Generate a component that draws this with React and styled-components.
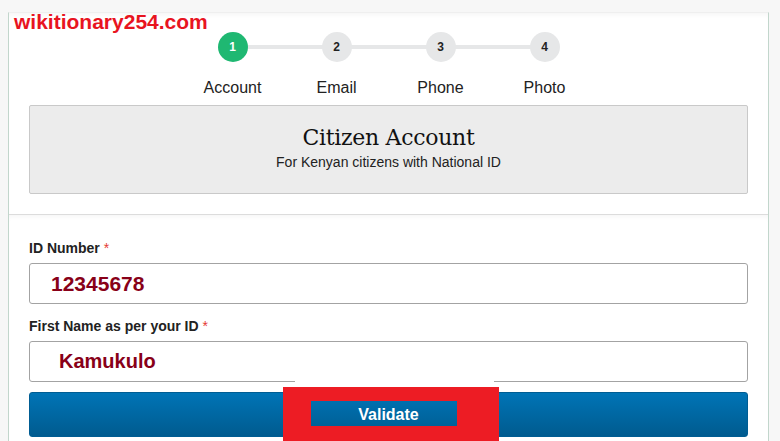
import React from 'react'
import styled, { createGlobalStyle } from 'styled-components'

const GlobalStyle = createGlobalStyle`
  html, body {
    margin: 0;
    padding: 0;
    background: #f7f7f7;
    font-family: 'Liberation Sans', Arial, sans-serif;
    color: #222;
  }
`

const steps = ['Account', 'Email', 'Phone', 'Photo']

export default function App () {
  return (
    <>
      <GlobalStyle />
      <Page>
        <Card>
          <Watermark>wikitionary254.com</Watermark>
          <Header>
            <Stepper>
              {steps.map((s, i) => (
                <Step key={s} $first={i === 0}>
                  <Dot $active={i === 0}>{i + 1}</Dot>
                  <StepLabel>{s}</StepLabel>
                </Step>
              ))}
            </Stepper>
            <TypeBox>
              <TypeTitle>Citizen Account</TypeTitle>
              <TypeSub>For Kenyan citizens with National ID</TypeSub>
            </TypeBox>
          </Header>
          <Form>
            <Label>ID Number <Req>*</Req></Label>
            <Input $indent={22} defaultValue='12345678' $size={21} readOnly />
            <Label>First Name as per your ID <Req>*</Req></Label>
            <Input $indent={30} defaultValue='Kamukulo' $size={20} readOnly />
            <ButtonWrap>
              <Patch />
              <Button type='button'>Validate</Button>
              <Highlight />
            </ButtonWrap>
          </Form>
        </Card>
      </Page>
    </>
  )
}

const Page = styled.div`
  min-height: 100vh;
  padding: 12px 11px 0 8px;
  box-sizing: border-box;
`
const Card = styled.div`
  position: relative;
  width: 761px;
  min-height: 440px;
  box-sizing: border-box;
  background: #fff;
  border-left: 1px solid #c2d6cc;
  border-right: 1px solid #c2d6cc;
  border-top: 1px solid #efefef;
  box-shadow: inset 0 5px 5px -3px rgba(0, 0, 0, 0.04);
`
const Watermark = styled.div`
  position: absolute;
  left: 5px;
  top: -2px;
  font-size: 21px;
  line-height: 21px;
  font-weight: 700;
  color: #e8141f;
  white-space: nowrap;
`
const Header = styled.div`
  padding: 19px 20px 20px;
  border-bottom: 1px solid #dcdcdc;
`
const Stepper = styled.div`
  display: grid;
  grid-template-columns: repeat(4, 104px);
  justify-content: center;
`
const Step = styled.div`
  position: relative;
  display: flex;
  flex-direction: column;
  align-items: center;
  &::before {
    content: '';
    display: ${p => (p.$first ? 'none' : 'block')};
    position: absolute;
    top: 13px;
    left: -50%;
    width: 100%;
    height: 4px;
    background: #e6e7e8;
  }
`
const Dot = styled.div`
  position: relative;
  z-index: 1;
  width: 30px;
  height: 30px;
  border-radius: 50%;
  display: flex;
  align-items: center;
  justify-content: center;
  font-size: 12px;
  font-weight: 700;
  background: ${p => (p.$active ? '#1fb872' : '#e6e7e8')};
  color: ${p => (p.$active ? '#fff' : '#222')};
`
const StepLabel = styled.div`
  margin-top: 17px;
  font-size: 16px;
  line-height: 18px;
  color: #222;
`
const TypeBox = styled.div`
  margin-top: 8px;
  background: #ececec;
  border: 1px solid #c9c9c9;
  border-radius: 2px;
  padding: 19px 10px 22px;
  text-align: center;
`
const TypeTitle = styled.div`
  font-family: 'DejaVu Serif', 'Liberation Serif', serif;
  font-size: 22px;
  line-height: 26px;
  color: #111;
  letter-spacing: -0.3px;
`
const TypeSub = styled.div`
  margin-top: 3px;
  font-size: 14px;
  line-height: 17px;
  color: #222;
`
const Form = styled.div`
  padding: 23px 20px 0;
  box-shadow: inset 0 5px 5px -3px rgba(0, 0, 0, 0.04);
`
const Label = styled.div`
  font-size: 14px;
  line-height: 20px;
  font-weight: 700;
  color: #222;
  margin-bottom: 5px;
`
const Req = styled.span`
  color: #e53935;
  font-weight: 400;
`
const Input = styled.input`
  display: block;
  width: 100%;
  height: 41px;
  box-sizing: border-box;
  margin: 0 0 12px;
  padding: 0 0 0 ${p => p.$indent - 1}px;
  border: 1px solid #a3a3a3;
  border-radius: 3px;
  font-family: 'Liberation Sans', Arial, sans-serif;
  font-size: ${p => p.$size}px;
  font-weight: 700;
  color: #880018;
  background: #fff;
  outline: none;
  &:last-of-type {
    margin-bottom: 0;
  }
`
const ButtonWrap = styled.div`
  position: relative;
  margin-top: 10px;
`
const Button = styled.button`
  display: block;
  width: 100%;
  height: 45px;
  border: 1px solid #005d93;
  border-radius: 3px;
  background: linear-gradient(#0074b6, #005b8f);
  color: #fff;
  font-family: 'Liberation Sans', Arial, sans-serif;
  font-size: 16px;
  font-weight: 700;
  padding: 0;
  cursor: pointer;
`
const Patch = styled.div`
  position: absolute;
  left: 266px;
  top: -12px;
  width: 199px;
  height: 12px;
  background: #fff;
`
const Highlight = styled.div`
  position: absolute;
  left: 254px;
  top: -5px;
  width: 146px;
  height: 25px;
  border-style: solid;
  border-color: #ed1c24;
  border-width: 14px 42px 20px 28px;
  pointer-events: none;
`
